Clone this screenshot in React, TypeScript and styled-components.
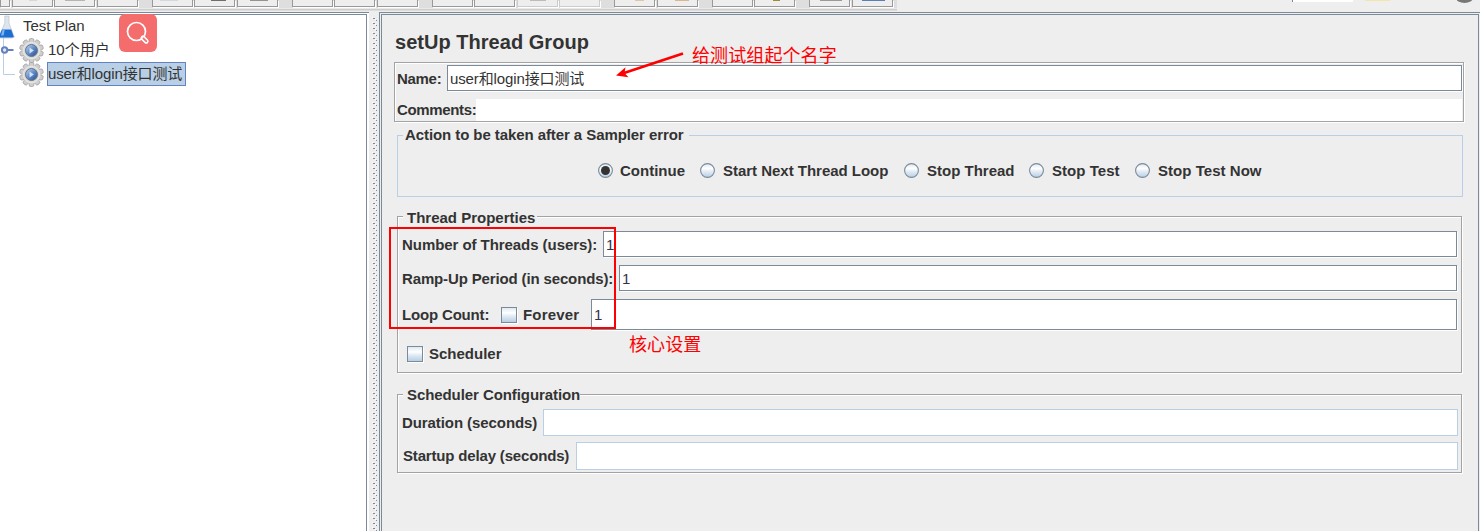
import React from "react";
import styled, { createGlobalStyle } from "styled-components";

const GlobalStyle = createGlobalStyle`
  * { box-sizing: border-box; }
  body {
    margin: 0;
    overflow: hidden;
    background: #eeeeee;
    color: #333333;
    font-family: "Liberation Sans", "Noto Sans CJK SC", sans-serif;
    font-size: 15px;
  }
`;

const Page = styled.div`
  position: relative;
  display: flex;
  flex-direction: column;
  width: 1480px;
  height: 531px;
  overflow: hidden;
`;

/* ---------- toolbar ---------- */

const Toolbar = styled.div`
  display: flex;
  flex: none;
  align-items: flex-start;
  justify-content: space-between;
  height: 12px;
`;

const ToolStrip = styled.div`
  display: flex;
  width: 897px;
  height: 12px;
  background: linear-gradient(#dedede 0 8px, #e9e9e9 8px 9px, #cccccc 9px 10px, #dddddd 10px 11px, #eeeeee 11px);
`;

const ToolButton = styled.div<{ $w: number; $gap: number; $off?: boolean }>`
  display: flex;
  flex: none;
  width: ${(p) => p.$w}px;
  height: 7px;
  margin-right: ${(p) => p.$gap}px;
  background: #eeeeee;
  border: solid ${(p) => (p.$off ? "#cccccc" : "#999999")};
  border-width: 0 1px 1px;
  box-shadow: 1px 1px 0 #ffffff;
`;

const ToolGlyph = styled.span<{ $x: number; $w: number; $c: string }>`
  width: ${(p) => p.$w}px;
  height: 1px;
  margin-left: ${(p) => p.$x}px;
  background: ${(p) => p.$c};
`;

const StatusStrip = styled.div`
  display: flex;
  width: 188px;
  height: 12px;
`;

const Counter = styled.div`
  width: 61px;
  height: 2px;
  background: #ffffff;
  border-left: 1px solid #7a8a99;
`;

const Warning = styled.div`
  width: 25px;
  height: 1px;
  margin: 0 67px 0 12px;
  background: #f4e6a8;
`;

type Tool = { w: number; gap: number; off?: boolean; glyph?: [number, number, string] };

const tools: Tool[] = [
  { w: 10, gap: 2 },
  { w: 41, gap: 1, glyph: [16, 8, "#d8d8d8"] },
  { w: 41, gap: 2, glyph: [10, 20, "#b5b5b5"] },
  { w: 41, gap: 14 },
  { w: 41, gap: 1, glyph: [7, 18, "#d5d9dc"] },
  { w: 41, gap: 2, glyph: [16, 15, "#6e6e6c"] },
  { w: 41, gap: 14, glyph: [12, 18, "#96938a"] },
  { w: 41, gap: 1 },
  { w: 41, gap: 2 },
  { w: 41, gap: 14 },
  { w: 41, gap: 1 },
  { w: 41, gap: 2 },
  { w: 41, gap: 1, off: true, glyph: [12, 16, "#bcbcbc"] },
  { w: 41, gap: 14, off: true },
  { w: 41, gap: 2, glyph: [20, 9, "#dcc9a4"] },
  { w: 41, gap: 14, glyph: [17, 14, "#d9b98c"] },
  { w: 41, gap: 1 },
  { w: 41, gap: 14, glyph: [18, 7, "#a08c30"] },
  { w: 41, gap: 2, glyph: [10, 22, "#9a9a9a"] },
  { w: 41, gap: 0, glyph: [9, 23, "#5a7fb8"] },
];

/* ---------- split panes ---------- */

const Main = styled.div`
  display: flex;
  flex: 1;
  min-height: 0;
`;

const TreePane = styled.div`
  display: flex;
  flex-direction: column;
  width: 369px;
  padding-right: 2px;
  border-top: 1px solid #7a8a99;
  background: #ffffff;
`;

const TreeView = styled.div`
  flex: 1;
  display: flex;
  border-top: 1px solid #7a8a99;
  border-right: 1px solid #7a8a99;
  margin-top: 1px;
`;

const TreeIcons = styled.svg`
  flex: none;
  width: 47px;
  height: 76px;
`;

const TreeRows = styled.div`
  display: flex;
  flex-direction: column;
  align-items: flex-start;
  margin-top: -1px;
`;

const TreeRow = styled.div<{ $selected?: boolean; $shift?: number; $ls?: number }>`
  height: 24px;
  line-height: 22px;
  margin-left: ${(p) => p.$shift ?? 0}px;
  padding: 0 3px 0 0;
  border: 1px solid ${(p) => (p.$selected ? "#6382bf" : "transparent")};
  background: ${(p) => (p.$selected ? "#b8cfe5" : "transparent")};
  letter-spacing: ${(p) => p.$ls ?? 0}px;
  white-space: nowrap;
`;

const Divider = styled.div`
  display: flex;
  justify-content: center;
  width: 10px;
  padding: 5px 0 0 1px;
  background: #eeeeee;
`;

const EditorPane = styled.div`
  flex: 1;
  display: flex;
  border: solid #7a8a99;
  border-width: 1px 0 0 1px;
`;

const Editor = styled.div`
  flex: 1;
  display: flex;
  flex-direction: column;
  margin: 1px 1px 0 1px;
  border: solid #7a8a99;
  border-width: 1px 1px 0 1px;
  padding: 0 14px 0 12px;
`;

const Title = styled.h1`
  margin: 14px 0 0 1px;
  height: 33px;
  font-size: 20px;
  line-height: 26px;
  font-weight: bold;
  letter-spacing: 0.03px;
`;

/* ---------- form parts ---------- */

const Label = styled.span<{ $w?: number; $ls?: number; $drop?: number }>`
  flex: none;
  width: ${(p) => (p.$w ? `${p.$w}px` : "auto")};
  padding-top: ${(p) => p.$drop ?? 0}px;
  font-weight: bold;
  line-height: 18px;
  letter-spacing: ${(p) => p.$ls ?? 0}px;
  white-space: nowrap;
`;

const TextField = styled.div<{ $h: number; $lh: number; $ls?: number }>`
  flex: 1;
  height: ${(p) => p.$h}px;
  padding-left: 2px;
  background: #ffffff;
  border: 1px solid #7a8a99;
  box-shadow: 1px 1px 0 #ffffff;
  line-height: ${(p) => p.$lh}px;
  letter-spacing: ${(p) => p.$ls ?? 0}px;
  white-space: nowrap;
`;

const NumberField = styled(TextField)`
  margin-right: 1px;
  color: #33334d;
`;

const CommentsField = styled.div`
  flex: 1;
  height: 22px;
  background: #ffffff;
`;

const DisabledField = styled.div<{ $h: number }>`
  flex: 1;
  height: ${(p) => p.$h}px;
  background: #ffffff;
  border: 1px solid #b8cfe5;
`;

const NameBox = styled.div`
  height: 60px;
  border: 1px solid #a3a3a3;
  box-shadow: 1px 1px 0 #ffffff, inset 1px 1px 0 #ffffff;
  padding: 2px 1px 0 2px;
`;

const Row = styled.div<{ $h: number; $mt?: number; $indent?: number }>`
  display: flex;
  align-items: center;
  height: ${(p) => p.$h}px;
  margin-top: ${(p) => p.$mt ?? 0}px;
  margin-left: ${(p) => p.$indent ?? 0}px;
`;

const Group = styled.section<{ $h: number; $mt: number; $tone?: "soft"; $mr?: number }>`
  height: ${(p) => p.$h}px;
  margin: ${(p) => p.$mt}px ${(p) => p.$mr ?? 2}px 0 3px;
  padding: 0 3px 0 4px;
  border: 1px solid ${(p) => (p.$tone ? "#b8cfe5" : "#a3a3a3")};
  box-shadow: ${(p) => (p.$tone ? "none" : "1px 1px 0 #ffffff, inset 1px 1px 0 #ffffff")};
`;

const Legend = styled.div<{ $w: number; $pad: number; $ls?: number; $lh?: number }>`
  width: ${(p) => p.$w}px;
  height: 18px;
  margin-top: -10px;
  margin-left: 1px;
  padding-left: ${(p) => p.$pad}px;
  background: #eeeeee;
  font-weight: bold;
  line-height: ${(p) => p.$lh ?? 18}px;
  letter-spacing: ${(p) => p.$ls ?? 0}px;
  white-space: nowrap;
`;

const Radios = styled.div`
  display: flex;
  margin: 18px 0 0 196px;
`;

const RadioOption = styled.div<{ $w: number; $gap: number }>`
  display: flex;
  align-items: center;
  gap: ${(p) => p.$gap}px;
  width: ${(p) => p.$w}px;
  height: 17px;
`;

const CheckBox = styled.span`
  flex: none;
  width: 16px;
  height: 16px;
  margin-right: 6px;
  border: 1px solid #7a8a99;
  background: linear-gradient(#dfe9f3, #ffffff 35%, #dfe9f4 60%, #b8cfe5);
  box-shadow: 1px 1px 0 #ffffff;
`;

/* ---------- annotations laid over the window ---------- */

const SearchBadge = styled.div`
  position: absolute;
  left: 119px;
  top: 14px;
  width: 38px;
  height: 38px;
  border-radius: 6px;
  background: #f56c6c;
`;

const Note = styled.div<{ $x: number; $y: number }>`
  position: absolute;
  left: ${(p) => p.$x}px;
  top: ${(p) => p.$y}px;
  color: #ff0000;
  font-size: 18px;
  line-height: 24px;
  letter-spacing: 0.1px;
  white-space: nowrap;
`;

const Highlight = styled.div`
  position: absolute;
  left: 389px;
  top: 227px;
  width: 227px;
  height: 102px;
  border: 2px solid #ff0000;
`;

const Arrow = styled.svg`
  position: absolute;
  left: 610px;
  top: 48px;
`;

const Gear = ({ y }: { y: number }) => (
  <g transform={`translate(31.5 ${y})`}>
    {[0, 36, 72, 108, 144, 180, 216, 252, 288, 324].map((a) => (
      <rect key={a} x="-2.4" y="-12" width="4.8" height="6" rx="1.6" fill="#cecece" stroke="#9a9a9a" strokeWidth="0.7" transform={`rotate(${a})`} />
    ))}
    <circle r="9.3" fill="#d6d6d6" />
    <circle r="8" fill="none" stroke="#ececec" strokeWidth="1" />
    <circle r="6" fill="url(#lens)" stroke="#6a7488" strokeWidth="1" />
    <path d="M-2 -3L2.4 0L-2 3Z" fill="#d3e2f4" />
  </g>
);

const Radio = ({ on }: { on?: boolean }) => (
  <svg width="15" height="15" viewBox="0 0 15 15">
    <circle cx="7.5" cy="7.5" r="6.9" fill="url(#radioFill)" stroke="#7a8a99" strokeWidth="1.1" />
    {on && <circle cx="7.5" cy="7.5" r="4.5" fill="#333333" />}
  </svg>
);

const radios = [
  { text: "Continue", w: 102, gap: 7, on: true, ls: 0 },
  { text: "Start Next Thread Loop", w: 204, gap: 8, ls: -0.02 },
  { text: "Stop Thread", w: 125, gap: 8, ls: 0 },
  { text: "Stop Test", w: 106, gap: 8, ls: 0.04 },
  { text: "Stop Test Now", w: 130, gap: 8, ls: 0.04 },
];

const bumps = Array.from({ length: 103 }, (_, i) => i * 5);

export default function App() {
  return (
    <Page>
      <GlobalStyle />
      <Toolbar>
        <ToolStrip>
          {tools.map((t, i) => (
            <ToolButton key={i} $w={t.w} $gap={t.gap} $off={t.off}>
              {t.glyph && <ToolGlyph $x={t.glyph[0]} $w={t.glyph[1]} $c={t.glyph[2]} />}
            </ToolButton>
          ))}
        </ToolStrip>
        <StatusStrip>
          <Counter />
          <Warning />
          <svg width="16" height="4">
            <ellipse cx="7.5" cy="-2" rx="8.5" ry="5" fill="#777777" />
          </svg>
        </StatusStrip>
      </Toolbar>

      <Main>
        <TreePane>
          <TreeView>
            <TreeIcons viewBox="0 15 47 76">
              <defs>
                <linearGradient id="lens" x1="0" y1="0" x2="1" y2="1">
                  <stop offset="0" stopColor="#c3d8f2" />
                  <stop offset="0.5" stopColor="#5f8cc9" />
                  <stop offset="1" stopColor="#27498a" />
                </linearGradient>
                <linearGradient id="radioFill" x1="0" y1="0" x2="0" y2="1">
                  <stop offset="0" stopColor="#dce7f2" />
                  <stop offset="0.35" stopColor="#ffffff" />
                  <stop offset="0.6" stopColor="#dfe9f4" />
                  <stop offset="1" stopColor="#b8cfe5" />
                </linearGradient>
              </defs>
              <path d="M3.5 38V74.5H15" fill="none" stroke="#b8cfe5" />
              <ellipse cx="7" cy="36.8" rx="8" ry="1.3" fill="#c4ccd6" />
              <path d="M4.8 16H9V23L14 36.5Q14 38 12 38H1Q-1 38 -1 36.5L4.8 23Z" fill="#dfe5ec" stroke="#b6bec8" strokeWidth="0.6" />
              <path d="M2 29.5H11.2L13.6 36.2Q13.2 37.6 12 37.6H1Q-1 37.6 -1 36.2Z" fill="#1c6fd2" />
              <path d="M2.5 30L1 35.5H3.6L4.6 30Z" fill="#7db4f2" />
              <path d="M7 50H13.5" stroke="#6382bf" strokeWidth="2" />
              <circle cx="4.6" cy="50" r="2.7" fill="#dfe8f3" stroke="#6382bf" strokeWidth="2" />
              <Gear y={50.5} />
              <Gear y={74.5} />
            </TreeIcons>
            <TreeRows>
              <TreeRow $shift={-25} $ls={0}>Test Plan</TreeRow>
              <TreeRow>10个用户</TreeRow>
              <TreeRow $selected $ls={-0.12}>user和login接口测试</TreeRow>
            </TreeRows>
          </TreeView>
        </TreePane>

        <Divider>
          <svg width="5" height="514">
            {bumps.map((y) => (
              <g key={y}>
                <rect x="0" y={y} width="1" height="1" fill="#ffffff" />
                <rect x="1" y={y + 1} width="2" height="1" fill="#7a8a99" />
                <rect x="3" y={y + 2} width="1" height="1" fill="#ffffff" />
                <rect x="4" y={y + 3} width="1" height="1" fill="#7a8a99" />
              </g>
            ))}
          </svg>
        </Divider>

        <EditorPane>
          <Editor>
            <Title>setUp Thread Group</Title>

            <NameBox>
              <Row $h={26}>
                <Label $w={50} $ls={-0.3} $drop={2}>Name:</Label>
                <TextField $h={26} $lh={25} $ls={-0.12}>user和login接口测试</TextField>
              </Row>
              <Row $h={22} $mt={8}>
                <Label $w={79} $ls={-0.35}>Comments:</Label>
                <CommentsField />
              </Row>
            </NameBox>

            <Group $h={62} $mt={13} $tone="soft" $mr={1}>
              <Legend $w={286} $pad={2} $ls={-0.08}>Action to be taken after a Sampler error</Legend>
              <Radios>
                {radios.map((r) => (
                  <RadioOption key={r.text} $w={r.w} $gap={r.gap}>
                    <Radio on={r.on} />
                    <Label $ls={r.ls}>{r.text}</Label>
                  </RadioOption>
                ))}
              </Radios>
            </Group>

            <Group $h={157} $mt={19}>
              <Legend $w={134} $pad={4} $lh={21}>Thread Properties</Legend>
              <Row $h={26} $mt={6}>
                <Label $w={201} $ls={-0.06} $drop={2}>Number of Threads (users):</Label>
                <NumberField $h={26} $lh={26}>1</NumberField>
              </Row>
              <Row $h={26} $mt={8}>
                <Label $w={217} $ls={-0.14} $drop={2}>Ramp-Up Period (in seconds):</Label>
                <NumberField $h={26} $lh={26}>1</NumberField>
              </Row>
              <Row $h={31} $mt={8}>
                <Label $w={99} $ls={-0.17}>Loop Count:</Label>
                <CheckBox />
                <Label $w={68} $ls={0.18}>Forever</Label>
                <NumberField $h={31} $lh={29}>1</NumberField>
              </Row>
              <Row $h={16} $mt={16} $indent={5}>
                <CheckBox />
                <Label>Scheduler</Label>
              </Row>
            </Group>

            <Group $h={79} $mt={21}>
              <Legend $w={177} $pad={4} $ls={-0.08} $lh={20}>Scheduler Configuration</Legend>
              <Row $h={27} $mt={6}>
                <Label $w={141} $ls={-0.08}>Duration (seconds)</Label>
                <DisabledField $h={27} />
              </Row>
              <Row $h={28} $mt={6} $indent={1}>
                <Label $w={173} $ls={-0.17}>Startup delay (seconds)</Label>
                <DisabledField $h={28} />
              </Row>
            </Group>
          </Editor>
        </EditorPane>
      </Main>

      <SearchBadge>
        <svg width="38" height="38" viewBox="0 0 38 38" fill="none" stroke="#ffffff">
          <circle cx="17.5" cy="17.5" r="9" strokeWidth="1.7" />
          <path d="M24 24L27.2 27.2" strokeWidth="5" strokeLinecap="round" />
          <path d="M24.4 24.4L27.2 27.2" stroke="#f56c6c" strokeWidth="1.8" strokeLinecap="round" />
        </svg>
      </SearchBadge>
      <Note $x={692} $y={44}>给测试组起个名字</Note>
      <Note $x={629} $y={333}>核心设置</Note>
      <Highlight />
      <Arrow width="80" height="34" viewBox="610 48 80 34">
        <path d="M683 53.5L624 73" stroke="#ff0000" strokeWidth="2.8" />
        <path d="M616 75.5L625.5 67.2L624.5 73L628.5 77.2Z" fill="#ff0000" />
      </Arrow>
    </Page>
  );
}
